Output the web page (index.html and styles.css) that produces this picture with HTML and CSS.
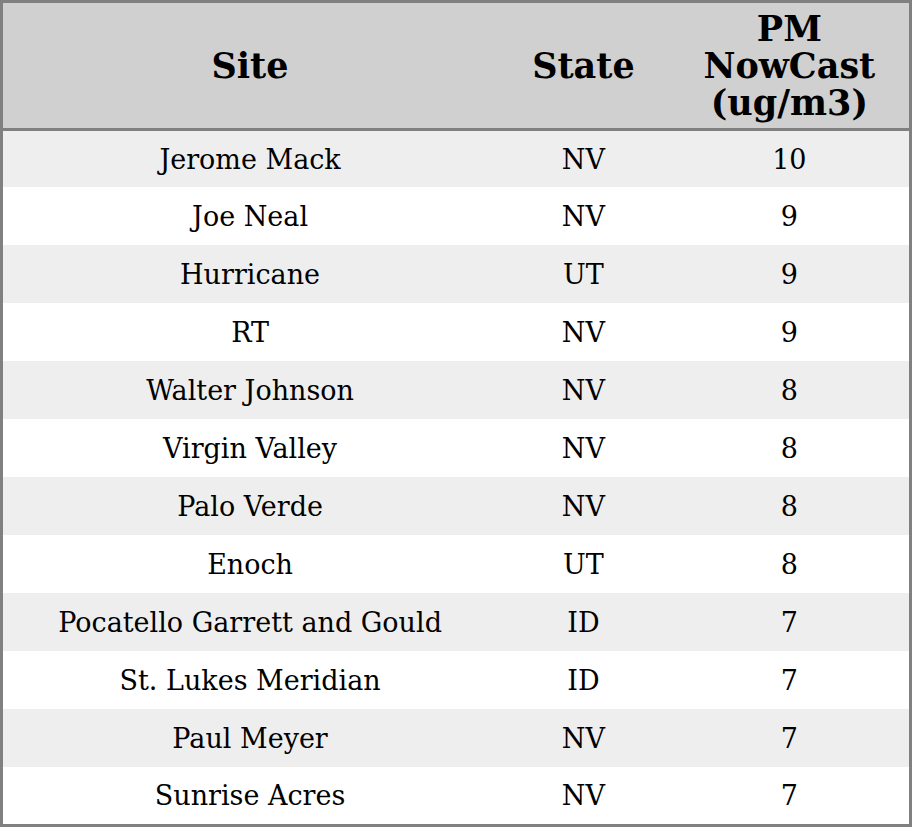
FILE: index.html
```html
<!DOCTYPE html>
<html>
<head>
<meta charset="utf-8">
<link rel="stylesheet" href="styles.css">
</head>
<body>
<table class="grid">
  <colgroup>
    <col class="c-site">
    <col class="c-state">
    <col class="c-pm">
  </colgroup>
  <thead>
    <tr><th>Site</th><th>State</th><th>PM<br>NowCast<br>(ug/m3)</th></tr>
  </thead>
  <tbody>
    <tr><td>Jerome Mack</td><td>NV</td><td>10</td></tr>
    <tr><td>Joe Neal</td><td>NV</td><td>9</td></tr>
    <tr><td>Hurricane</td><td>UT</td><td>9</td></tr>
    <tr><td>RT</td><td>NV</td><td>9</td></tr>
    <tr><td>Walter Johnson</td><td>NV</td><td>8</td></tr>
    <tr><td>Virgin Valley</td><td>NV</td><td>8</td></tr>
    <tr><td>Palo Verde</td><td>NV</td><td>8</td></tr>
    <tr><td>Enoch</td><td>UT</td><td>8</td></tr>
    <tr><td>Pocatello Garrett and Gould</td><td>ID</td><td>7</td></tr>
    <tr><td>St. Lukes Meridian</td><td>ID</td><td>7</td></tr>
    <tr><td>Paul Meyer</td><td>NV</td><td>7</td></tr>
    <tr><td>Sunrise Acres</td><td>NV</td><td>7</td></tr>
  </tbody>
</table>
</body>
</html>
```
FILE: styles.css
```css
html, body {
  margin: 0;
  padding: 0;
  background: #ffffff;
}
.grid {
  width: 912px;
  height: 827px;
  border-collapse: collapse;
  border: 3px solid #808080;
  font-family: "DejaVu Serif", serif;
  color: #000;
  table-layout: fixed;
}
.c-site { width: 494px; }
.c-state { width: 172px; }
.c-pm { width: 240px; }
.grid th {
  background: #d0d0d0;
  font-weight: bold;
  font-size: 35px;
  line-height: 37px;
  height: 125px;
  padding: 0;
  text-align: center;
  vertical-align: middle;
  border-bottom: 3px solid #808080;
}
.grid td {
  font-size: 27px;
  text-align: center;
  vertical-align: middle;
  padding: 0;
  height: 58px;
}
.grid tbody tr:first-child td {
  height: 56px;
}
.grid tbody tr:last-child td {
  height: 57px;
}
.grid tbody tr:nth-child(odd) td {
  background: #eeeeee;
}
```
